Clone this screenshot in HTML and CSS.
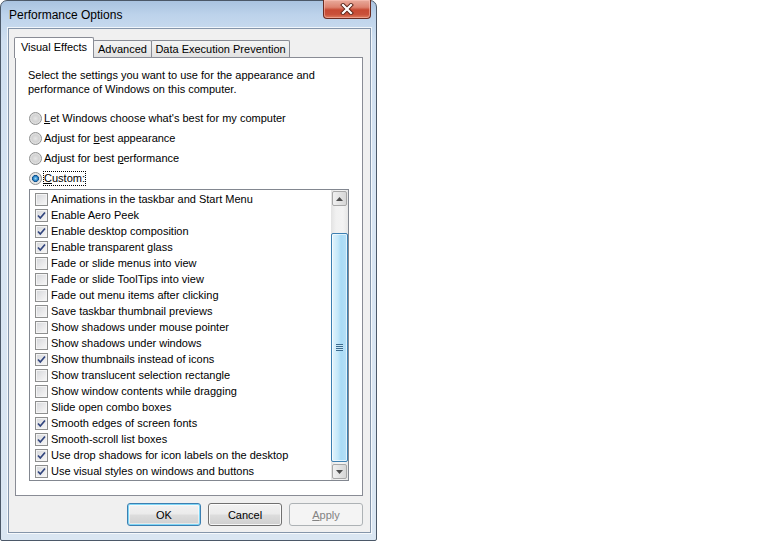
FILE: index.html
```html
<!DOCTYPE html>
<html>
<head>
<meta charset="utf-8">
<title>Performance Options</title>
<link rel="stylesheet" href="styles.css">
</head>
<body>
<div class="window">
  <div class="titlebar">
    <span class="title">Performance Options</span>
    <div class="close">
      <svg width="14" height="12" viewBox="0 0 14 12">
        <path d="M3 2 L11 10 M11 2 L3 10" stroke="#5a2418" stroke-width="4" stroke-linecap="square"/>
        <path d="M3 2 L11 10 M11 2 L3 10" stroke="#ffffff" stroke-width="2.2" stroke-linecap="square"/>
      </svg>
    </div>
  </div>
  <div class="client">
    <div class="tabs">
      <div class="tab active t1">Visual Effects</div>
      <div class="tab t2">Advanced</div>
      <div class="tab t3">Data Execution Prevention</div>
    </div>
    <div class="panel">
      <p class="intro">Select the settings you want to use for the appearance and<br>performance of Windows on this computer.</p>
      <div class="radios">
        <div class="radio-row"><span class="radio"></span><span><u>L</u>et Windows choose what's best for my computer</span></div>
        <div class="radio-row"><span class="radio"></span><span>Adjust for <u>b</u>est appearance</span></div>
        <div class="radio-row"><span class="radio"></span><span>Adjust for best <u>p</u>erformance</span></div>
        <div class="radio-row"><span class="radio checked"></span><span class="focus"><u>C</u>ustom:</span></div>
      </div>
      <div class="listbox">
        <ul class="items">
          <li class="item"><span class="cb"></span>Animations in the taskbar and Start Menu</li>
          <li class="item"><span class="cb on"><svg width="11" height="11" viewBox="0 0 11 11"><path d="M2 5.5 L4.3 8 L9 2.5" class="tick"/></svg></span>Enable Aero Peek</li>
          <li class="item"><span class="cb on"><svg width="11" height="11" viewBox="0 0 11 11"><path d="M2 5.5 L4.3 8 L9 2.5" class="tick"/></svg></span>Enable desktop composition</li>
          <li class="item"><span class="cb on"><svg width="11" height="11" viewBox="0 0 11 11"><path d="M2 5.5 L4.3 8 L9 2.5" class="tick"/></svg></span>Enable transparent glass</li>
          <li class="item"><span class="cb"></span>Fade or slide menus into view</li>
          <li class="item"><span class="cb"></span>Fade or slide ToolTips into view</li>
          <li class="item"><span class="cb"></span>Fade out menu items after clicking</li>
          <li class="item"><span class="cb"></span>Save taskbar thumbnail previews</li>
          <li class="item"><span class="cb"></span>Show shadows under mouse pointer</li>
          <li class="item"><span class="cb"></span>Show shadows under windows</li>
          <li class="item"><span class="cb on"><svg width="11" height="11" viewBox="0 0 11 11"><path d="M2 5.5 L4.3 8 L9 2.5" class="tick"/></svg></span>Show thumbnails instead of icons</li>
          <li class="item"><span class="cb"></span>Show translucent selection rectangle</li>
          <li class="item"><span class="cb"></span>Show window contents while dragging</li>
          <li class="item"><span class="cb"></span>Slide open combo boxes</li>
          <li class="item"><span class="cb on"><svg width="11" height="11" viewBox="0 0 11 11"><path d="M2 5.5 L4.3 8 L9 2.5" class="tick"/></svg></span>Smooth edges of screen fonts</li>
          <li class="item"><span class="cb on"><svg width="11" height="11" viewBox="0 0 11 11"><path d="M2 5.5 L4.3 8 L9 2.5" class="tick"/></svg></span>Smooth-scroll list boxes</li>
          <li class="item"><span class="cb on"><svg width="11" height="11" viewBox="0 0 11 11"><path d="M2 5.5 L4.3 8 L9 2.5" class="tick"/></svg></span>Use drop shadows for icon labels on the desktop</li>
          <li class="item"><span class="cb on"><svg width="11" height="11" viewBox="0 0 11 11"><path d="M2 5.5 L4.3 8 L9 2.5" class="tick"/></svg></span>Use visual styles on windows and buttons</li>
        </ul>
        <div class="scrollbar">
          <div class="sb-btn"><svg width="7" height="4" viewBox="0 0 7 4"><path d="M0 4 L3.5 0 L7 4 Z" fill="#4d4d4d"/></svg></div>
          <div class="sb-track"><div class="thumb"><span class="grip"></span></div></div>
          <div class="sb-btn"><svg width="7" height="4" viewBox="0 0 7 4"><path d="M0 0 L3.5 4 L7 0 Z" fill="#4d4d4d"/></svg></div>
        </div>
      </div>
    </div>
    <div class="buttons">
      <button class="btn default">OK</button>
      <button class="btn">Cancel</button>
      <button class="btn disabled"><u>A</u>pply</button>
    </div>
  </div>
</div>
</body>
</html>
```
FILE: styles.css
```css
* { box-sizing: border-box; }
body {
  margin: 0;
  background: #ffffff;
  font-family: "Liberation Sans", Arial, sans-serif;
  font-size: 11px;
  color: #000000;
}
.window {
  width: 377px;
  height: 541px;
  border: 1px solid #4b5868;
  border-radius: 7px 7px 2px 2px;
  background: linear-gradient(180deg, #a9c3e0 0px, #bdd3eb 14px, #cfdff0 40px, #d8e5f3 200px, #dae6f2 100%);
  display: flex;
  flex-direction: column;
}
.titlebar {
  height: 27px;
  display: flex;
  align-items: flex-start;
  justify-content: space-between;
}
.title {
  font-size: 12px;
  line-height: 16px;
  padding: 6px 0 0 8px;
}
.close {
  width: 48px;
  height: 19px;
  margin-top: -1px;
  margin-right: 5px;
  border: 1px solid #6a2b22;
  border-top: none;
  border-radius: 0 0 4px 4px;
  background: linear-gradient(180deg, #e9ab9c 0%, #dd8370 40%, #c74a33 55%, #c9503a 80%, #de7d5f 100%);
  box-shadow: inset 0 0 0 1px rgba(255, 200, 190, 0.5);
  display: flex;
  align-items: center;
  justify-content: center;
}
.client {
  margin-left: 7px;
  width: 363px;
  height: 505px;
  border: 1px solid #8495aa;
  background: #f0f0f0;
  box-shadow: 0 0 0 1px rgba(255, 255, 255, 0.75);
  display: flex;
  flex-direction: column;
}
.tabs {
  display: flex;
  align-items: flex-end;
  height: 20px;
  margin-top: 8px;
  padding-left: 5px;
}
.tab {
  height: 17px;
  border: 1px solid #898c95;
  border-bottom: none;
  border-radius: 2px 2px 0 0;
  background: linear-gradient(180deg, #f4f4f4 0%, #ececec 50%, #e1e1e1 100%);
  line-height: 16px;
  text-align: center;
  margin-left: -1px;
}
.tab.active {
  height: 21px;
  margin-bottom: -1px;
  margin-left: 0;
  background: #ffffff;
  line-height: 19px;
  position: relative;
  z-index: 1;
}
.t1 { width: 80px; }
.t2 { width: 59px; }
.t3 { width: 139px; }
.panel {
  margin-left: 6px;
  width: 348px;
  height: 439px;
  border: 1px solid #898c95;
  background: #ffffff;
  padding: 10px 0 0 12px;
}
.intro {
  margin: 0;
  line-height: 14px;
}
.radios {
  margin-top: 12px;
}
.radio-row {
  height: 20px;
  display: flex;
  align-items: center;
  margin-left: 1px;
}
.radio {
  width: 13px;
  height: 13px;
  border-radius: 50%;
  border: 1px solid #8e8f8f;
  background: radial-gradient(circle at 50% 50%, #e6e6e6 0%, #d2d2d2 45%, #f4f4f4 100%);
  margin-right: 2px;
  flex: none;
}
.radio.checked {
  background: radial-gradient(circle at 50% 50%, #9ed8f4 0%, #2b85c8 28%, #124c84 42%, #e2e2e2 48%, #f4f4f4 100%);
}
.focus {
  outline: 1px dotted #000000;
  outline-offset: 0;
  line-height: 13px;
}
.listbox {
  margin-top: 1px;
  margin-left: 1px;
  width: 320px;
  height: 292px;
  border: 1px solid #828790;
  display: flex;
}
.items {
  flex: 1;
  list-style: none;
  margin: 0;
  padding: 1px 0 0 5px;
}
.item {
  height: 16px;
  display: flex;
  align-items: center;
  white-space: nowrap;
}
.cb {
  width: 13px;
  height: 13px;
  border: 1px solid #8e8f8f;
  background: linear-gradient(135deg, #d4d6da 0%, #ebebec 60%, #f8f8f8 100%);
  box-shadow: inset 0 0 0 1px #f4f4f4;
  margin-right: 3px;
  flex: none;
  display: flex;
  align-items: center;
  justify-content: center;
}
.tick {
  fill: none;
  stroke: #31457e;
  stroke-width: 1.7;
}
.scrollbar {
  width: 17px;
  display: flex;
  flex-direction: column;
  background: linear-gradient(90deg, #e3e3e3 0%, #f1f1f1 30%, #f3f3f3 70%, #e6e6e6 100%);
}
.sb-btn {
  height: 15px;
  margin: 1px 1px;
  border: 1px solid #a7a7a7;
  border-radius: 2px;
  background: linear-gradient(90deg, #f0f0f0 0%, #e3e3e3 50%, #d6d6d6 100%);
  display: flex;
  align-items: center;
  justify-content: center;
}
.sb-track {
  flex: 1;
  padding-top: 26px;
}
.thumb {
  height: 229px;
  border: 1px solid #3c7fb1;
  border-radius: 2px;
  background: linear-gradient(90deg, #e3f4fc 0%, #c4e8fa 40%, #a9dbf6 60%, #b6e0f7 100%);
  box-shadow: inset 0 0 0 1px rgba(255, 255, 255, 0.6);
  display: flex;
  align-items: center;
  justify-content: center;
}
.grip {
  width: 7px;
  height: 7px;
  background: repeating-linear-gradient(180deg, #3b6b8f 0px, #3b6b8f 1px, #c8e8f8 1px, #c8e8f8 2px);
}
.buttons {
  display: flex;
  justify-content: flex-end;
  gap: 7px;
  margin-top: 7px;
  padding-right: 7px;
}
.btn {
  width: 74px;
  height: 23px;
  border: 1px solid #707070;
  border-radius: 3px;
  background: linear-gradient(180deg, #f2f2f2 0%, #ebebeb 48%, #dddddd 52%, #cfcfcf 100%);
  box-shadow: inset 0 0 0 1px rgba(255, 255, 255, 0.8);
  font-family: "Liberation Sans", Arial, sans-serif;
  font-size: 11px;
  color: #000000;
  padding: 0;
}
.btn.default {
  border-color: #3c7fb1;
  box-shadow: inset 0 0 0 1px #7fd6f6, inset 0 0 0 2px rgba(255, 255, 255, 0.5);
}
.btn.disabled {
  border-color: #adb2b5;
  background: #f4f4f4;
  box-shadow: none;
  color: #838383;
}
```
